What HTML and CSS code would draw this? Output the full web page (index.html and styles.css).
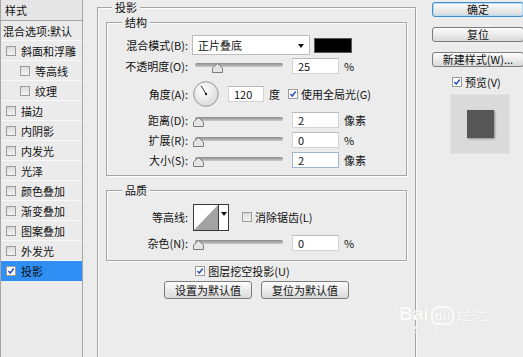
FILE: index.html
```html
<!DOCTYPE html>
<html lang="zh-CN">
<head>
    <meta charset="UTF-8">
    <title>图层样式 - 投影</title>
    <link rel="stylesheet" href="styles.css">
</head>
<body>
    <div class="dialog">
        <aside class="style-list">
            <div class="list-head">样式</div>
            <div class="list-item plain">混合选项:默认</div>
            <div class="list-item"><span class="cb"></span>斜面和浮雕</div>
            <div class="list-item sub"><span class="cb"></span>等高线</div>
            <div class="list-item sub"><span class="cb"></span>纹理</div>
            <div class="list-item"><span class="cb"></span>描边</div>
            <div class="list-item"><span class="cb"></span>内阴影</div>
            <div class="list-item"><span class="cb"></span>内发光</div>
            <div class="list-item"><span class="cb"></span>光泽</div>
            <div class="list-item"><span class="cb"></span>颜色叠加</div>
            <div class="list-item"><span class="cb"></span>渐变叠加</div>
            <div class="list-item"><span class="cb"></span>图案叠加</div>
            <div class="list-item"><span class="cb"></span>外发光</div>
            <div class="list-item selected"><span class="cb on"><svg viewBox="0 0 9 9"><path d="M1.5 4.6 L3.6 6.8 L7.6 1.6" /></svg></span>投影</div>
        </aside>

        <main class="panel">
            <fieldset class="group outer">
                <legend>投影</legend>

                <fieldset class="group inner">
                    <legend>结构</legend>
                    <div class="row r-blend">
                        <span class="label">混合模式(B):</span>
                        <div class="select">正片叠底<span class="arrow"></span></div>
                        <span class="swatch"></span>
                    </div>
                    <div class="row r-opacity">
                        <span class="label">不透明度(O):</span>
                        <div class="slider" style="--pos: 25%"><span class="track"></span><svg class="thumb" viewBox="0 0 11 10"><polygon points="5.5,0.5 10.5,5 10.5,9.5 0.5,9.5 0.5,5" /></svg></div>
                        <span class="field">25</span>
                        <span class="unit">%</span>
                    </div>
                    <div class="row r-angle">
                        <span class="label">角度(A):</span>
                        <svg class="dial" viewBox="0 0 26 26">
                            <defs>
                                <radialGradient id="dialFill" cx="40%" cy="35%" r="70%">
                                    <stop offset="0" stop-color="#ffffff" />
                                    <stop offset="1" stop-color="#d8d8d8" />
                                </radialGradient>
                            </defs>
                            <circle cx="13" cy="13" r="12.3" fill="url(#dialFill)" stroke="#8e8e8e" stroke-width="0.9" />
                            <line x1="13" y1="13" x2="8.2" y2="4.8" stroke="#333" stroke-width="1" />
                            <circle cx="13" cy="13" r="1.2" fill="#222" />
                        </svg>
                        <span class="field short">120</span>
                        <span class="unit">度</span>
                        <label class="check global"><span class="cb on"><svg viewBox="0 0 9 9"><path d="M1.5 4.6 L3.6 6.8 L7.6 1.6" /></svg></span>使用全局光(G)</label>
                    </div>
                    <div class="row r-distance">
                        <span class="label">距离(D):</span>
                        <div class="slider" style="--pos: 0%"><span class="track"></span><svg class="thumb" viewBox="0 0 11 10"><polygon points="5.5,0.5 10.5,5 10.5,9.5 0.5,9.5 0.5,5" /></svg></div>
                        <span class="field">2</span>
                        <span class="unit">像素</span>
                    </div>
                    <div class="row">
                        <span class="label">扩展(R):</span>
                        <div class="slider" style="--pos: 0%"><span class="track"></span><svg class="thumb" viewBox="0 0 11 10"><polygon points="5.5,0.5 10.5,5 10.5,9.5 0.5,9.5 0.5,5" /></svg></div>
                        <span class="field">0</span>
                        <span class="unit">%</span>
                    </div>
                    <div class="row">
                        <span class="label">大小(S):</span>
                        <div class="slider" style="--pos: 0%"><span class="track"></span><svg class="thumb" viewBox="0 0 11 10"><polygon points="5.5,0.5 10.5,5 10.5,9.5 0.5,9.5 0.5,5" /></svg></div>
                        <span class="field focused">2</span>
                        <span class="unit">像素</span>
                    </div>
                </fieldset>

                <fieldset class="group inner quality">
                    <legend>品质</legend>
                    <div class="row r-contour">
                        <span class="label">等高线:</span>
                        <div class="contour">
                            <svg class="curve" viewBox="0 0 26 27"><rect x="0.5" y="0.5" width="25" height="26" fill="#fff" stroke="#3a3a3a" /><polygon points="1,26 25,1 25,26" fill="#a3a3a3" /></svg>
                            <span class="contour-drop"><span class="arrow"></span></span>
                        </div>
                        <label class="check aa"><span class="cb"></span>消除锯齿(L)</label>
                    </div>
                    <div class="row r-noise">
                        <span class="label">杂色(N):</span>
                        <div class="slider" style="--pos: 0%"><span class="track"></span><svg class="thumb" viewBox="0 0 11 10"><polygon points="5.5,0.5 10.5,5 10.5,9.5 0.5,9.5 0.5,5" /></svg></div>
                        <span class="field">0</span>
                        <span class="unit">%</span>
                    </div>
                </fieldset>

                <label class="check knockout"><span class="cb on"><svg viewBox="0 0 9 9"><path d="M1.5 4.6 L3.6 6.8 L7.6 1.6" /></svg></span>图层挖空投影(U)</label>
                <div class="btn-row">
                    <button class="btn wide">设置为默认值</button>
                    <button class="btn wide">复位为默认值</button>
                </div>
            </fieldset>
        </main>

        <aside class="actions">
            <button class="btn primary">确定</button>
            <button class="btn">复位</button>
            <button class="btn">新建样式(W)...</button>
            <label class="check preview-check"><span class="cb on"><svg viewBox="0 0 9 9"><path d="M1.5 4.6 L3.6 6.8 L7.6 1.6" /></svg></span>预览(V)</label>
            <div class="preview"><span class="preview-square"></span></div>
        </aside>

        <div class="watermark">
            <span class="wm-bai">Bai</span><span class="wm-du">du</span><span class="wm-jy">经验</span>
            <div class="wm-url">jingyan.baidu.com</div>
        </div>
    </div>
</body>
</html>
```

FILE: styles.css
```css
* {
    box-sizing: border-box;
}
body {
    margin: 0;
    width: 523px;
    height: 357px;
    overflow: hidden;
    background-color: #ececec;
    font-family: "Noto Sans CJK SC", "Noto Sans", sans-serif;
    font-size: 11px;
    color: #111;
}
.dialog {
    position: relative;
    display: flex;
    height: 357px;
}

/* left style list */
.style-list {
    flex: none;
    width: 83px;
    border-left: 1px solid #a6a6a6;
    border-right: 1px solid #a6a6a6;
    background-color: #ebebeb;
}
.list-head {
    height: 21px;
    line-height: 20px;
    padding-left: 4px;
    border-bottom: 1px solid #a6a6a6;
    background-color: #e6e6e6;
}
.list-item {
    display: flex;
    align-items: center;
    gap: 5px;
    height: 20px;
    padding-left: 5px;
    border-bottom: 1px solid #f8f8f8;
    white-space: nowrap;
}
.list-item.plain {
    padding-left: 2px;
}
.list-item.sub {
    padding-left: 19px;
}
.list-item.selected {
    background-color: #2f8ff4;
    border-bottom-color: #2f8ff4;
}

/* checkbox */
.cb {
    flex: none;
    display: inline-block;
    width: 10px;
    height: 10px;
    border: 1px solid #9b9b9b;
    background: linear-gradient(#dcdcdc, #f3f3f3);
}
.cb.on {
    background: #fff;
}
.cb svg {
    display: block;
    width: 8px;
    height: 8px;
}
.cb svg path {
    fill: none;
    stroke: #2b55b8;
    stroke-width: 1.7;
}
.check {
    display: flex;
    align-items: center;
    gap: 3px;
    white-space: nowrap;
}

/* middle panel */
.panel {
    flex: none;
    width: 319px;
    margin-left: 14px;
}
.group {
    margin: 0;
    border: 1px solid #a4a4a4;
    box-shadow: inset 1px 1px 0 #fbfbfb, 1px 1px 0 #fbfbfb;
    min-width: 0;
}
.group legend {
    padding: 0 3px;
    line-height: 12px;
    background-color: #ececec;
}
.outer {
    height: 357px;
    padding: 0 8px;
    border-bottom: none;
}
.outer > legend {
    margin-left: 6px;
    line-height: 14px;
}
.inner {
    margin-top: 2px;
    padding: 7px 0 5px 0;
}
.inner > legend {
    margin-left: 15px;
}
.quality {
    margin-top: 8px;
    padding: 7px 0 7px 0;
}

.row {
    display: flex;
    align-items: center;
    height: 20px;
    white-space: nowrap;
}
.r-opacity {
    margin-top: 1px;
}
.r-angle {
    height: 28px;
    margin-top: 4px;
}
.r-distance {
    margin-top: 2px;
}
.r-contour {
    height: 28px;
}
.r-noise {
    margin-top: 2px;
}
.label {
    width: 81px;
    text-align: right;
}

.select {
    position: relative;
    width: 118px;
    height: 20px;
    margin-left: 4px;
    padding-left: 5px;
    line-height: 18px;
    background-color: #fff;
    border: 1px solid #bdbdbd;
}
.select .arrow {
    position: absolute;
    right: 5px;
    top: 8px;
}
.arrow {
    display: block;
    width: 0;
    height: 0;
    border-left: 3px solid transparent;
    border-right: 3px solid transparent;
    border-top: 4px solid #111;
}
.swatch {
    width: 38px;
    height: 15px;
    margin-left: 4px;
    background-color: #000;
    border: 1px solid #5a5a5a;
}

.slider {
    position: relative;
    width: 88px;
    height: 11px;
    margin-left: 7px;
    margin-top: 2px;
}
.track {
    display: block;
    height: 4px;
    margin-top: 1px;
    border-radius: 2px;
    background: linear-gradient(#8a8a8a, #c9c9c9);
}
.thumb {
    position: absolute;
    top: 1px;
    left: calc(var(--pos) * 0.85 - 2px);
    width: 11px;
    height: 10px;
}
.thumb polygon {
    fill: #e4e4e4;
    stroke: #6f6f6f;
    stroke-width: 0.9;
}

.field {
    width: 47px;
    height: 16px;
    margin-left: 9px;
    padding-left: 5px;
    line-height: 14px;
    background-color: #fff;
    border: 1px solid #d3d3d3;
    border-top-color: #b9b9b9;
}
.field.short {
    width: 36px;
}
.field.focused {
    border-color: #9fb6cc;
}
.unit {
    margin-left: 5px;
}
.dial {
    width: 26px;
    height: 26px;
    margin-left: 5px;
}
.global {
    margin-left: 8px;
}

.contour {
    display: flex;
    margin-left: 5px;
}
.curve {
    width: 26px;
    height: 27px;
}
.contour-drop {
    display: flex;
    justify-content: center;
    padding-top: 7px;
    width: 10px;
    height: 27px;
    background-color: #fff;
    border: 1px solid #3a3a3a;
    border-left: none;
}
.aa {
    margin-left: 13px;
}

.knockout {
    justify-content: center;
    height: 14px;
    margin-top: 3px;
    padding-right: 28px;
}
.btn-row {
    display: flex;
    justify-content: center;
    gap: 9px;
    margin-top: 3px;
}

/* buttons */
.btn {
    display: block;
    height: 16px;
    padding: 0;
    font-family: inherit;
    font-size: 11px;
    line-height: 14px;
    color: #111;
    text-align: center;
    border: 1px solid #7c7c7c;
    border-radius: 3px;
    background: linear-gradient(#fdfdfd, #d9d9d9);
    white-space: nowrap;
}
.btn.wide {
    width: 88px;
    height: 18px;
    line-height: 16px;
}

/* right column */
.actions {
    flex: none;
    width: 92px;
    margin-left: 16px;
}
.actions .btn {
    width: 92px;
    height: 15px;
    line-height: 13px;
    margin-top: 10px;
}
.actions .btn.primary {
    margin-top: 2px;
    border-color: #3f8fcf;
    box-shadow: inset 0 0 0 1px #b5dcf5;
}
.preview-check {
    height: 14px;
    margin-top: 8px;
    margin-left: 20px;
}
.preview {
    display: flex;
    align-items: center;
    justify-content: center;
    width: 60px;
    height: 60px;
    margin-top: 5px;
    margin-left: 18px;
    background-color: #dadada;
    border: 1px solid #e2e2e2;
}
.preview-square {
    width: 27px;
    height: 28px;
    background-color: #565656;
    box-shadow: 1px 1px 2px rgba(0, 0, 0, 0.35);
}

/* watermark overlay */
.watermark {
    position: absolute;
    left: 399px;
    top: 303px;
    color: #fafafa;
    text-shadow: 0 0 1px #d0d0d0;
    white-space: nowrap;
}
.wm-bai {
    font-family: "Liberation Sans", sans-serif;
    font-size: 19px;
    font-weight: bold;
}
.wm-du {
    display: inline-block;
    margin-left: 2px;
    padding: 0 2px;
    font-family: "Liberation Sans", sans-serif;
    font-size: 13px;
    font-weight: bold;
    border: 2px solid #fafafa;
    border-radius: 8px 8px 6px 6px;
}
.wm-jy {
    margin-left: 2px;
    font-size: 15px;
}
.wm-url {
    margin-top: -2px;
    font-family: "Liberation Sans", sans-serif;
    font-size: 9px;
    letter-spacing: 0.4px;
}
```
